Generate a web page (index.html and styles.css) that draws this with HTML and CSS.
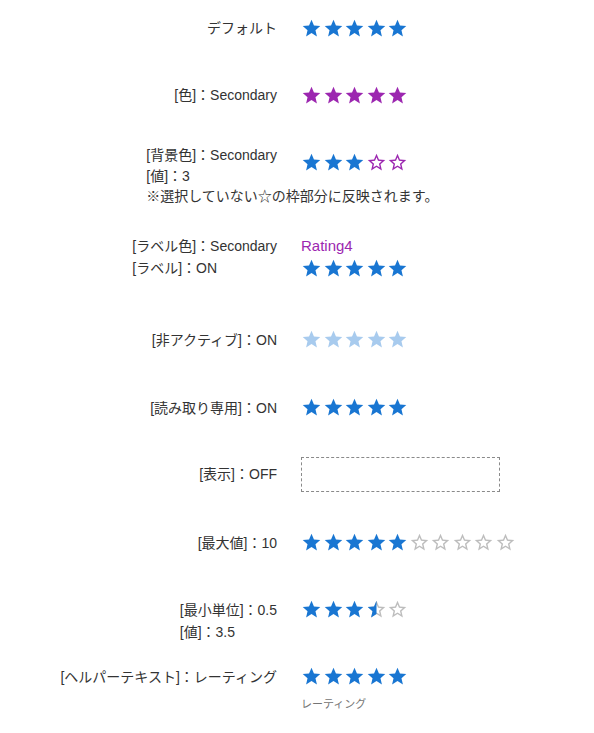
FILE: index.html
```html
<!DOCTYPE html>
<html lang="ja">
<head>
    <meta charset="UTF-8">
    <meta name="viewport" content="width=device-width, initial-scale=1.0">
    <title>Rating</title>
    <link rel="stylesheet" href="styles.css">
</head>
<body>

    <!-- star shapes shared by every rating below -->
    <svg class="defs" aria-hidden="true">
        <symbol id="star-full" viewBox="0 0 24 24">
            <path d="M12 17.27L18.18 21l-1.64-7.03L22 9.24l-7.19-.61L12 2 9.19 8.63 2 9.24l5.46 4.73L5.82 21z"/>
        </symbol>
        <symbol id="star-empty" viewBox="0 0 24 24">
            <path d="M22 9.24l-7.19-.62L12 2 9.19 8.63 2 9.24l5.46 4.73L5.82 21 12 17.27 18.18 21l-1.63-7.03L22 9.24zM12 15.4l-3.76 2.27 1-4.28-3.32-2.88 4.38-.38L12 6.1l1.71 4.04 4.38.38-3.32 2.88 1 4.28L12 15.4z"/>
        </symbol>
        <clipPath id="left-half">
            <rect x="0" y="0" width="12" height="24"/>
        </clipPath>
    </svg>

    <div class="page">

        <div class="row gap-45">
            <div class="label">デフォルト</div>
            <div class="stars">
                <svg class="star"><use href="#star-full"/></svg>
                <svg class="star"><use href="#star-full"/></svg>
                <svg class="star"><use href="#star-full"/></svg>
                <svg class="star"><use href="#star-full"/></svg>
                <svg class="star"><use href="#star-full"/></svg>
            </div>
        </div>

        <div class="row gap-39">
            <div class="label">[色]：Secondary</div>
            <div class="stars secondary">
                <svg class="star"><use href="#star-full"/></svg>
                <svg class="star"><use href="#star-full"/></svg>
                <svg class="star"><use href="#star-full"/></svg>
                <svg class="star"><use href="#star-full"/></svg>
                <svg class="star"><use href="#star-full"/></svg>
            </div>
        </div>

        <div class="row gap-28">
            <div class="label compact">
                <div>[背景色]：Secondary</div>
                <div>[値]：3</div>
                <div class="note">※選択していない☆の枠部分に反映されます。</div>
            </div>
            <div class="stars drop">
                <svg class="star"><use href="#star-full"/></svg>
                <svg class="star"><use href="#star-full"/></svg>
                <svg class="star"><use href="#star-full"/></svg>
                <svg class="star secondary"><use href="#star-empty"/></svg>
                <svg class="star secondary"><use href="#star-empty"/></svg>
            </div>
        </div>

        <div class="row gap-49">
            <div class="label">
                <div>[ラベル色]：Secondary</div>
                <div>[ラベル]：ON</div>
            </div>
            <div>
                <div class="rating-label">Rating4</div>
                <div class="stars">
                    <svg class="star"><use href="#star-full"/></svg>
                    <svg class="star"><use href="#star-full"/></svg>
                    <svg class="star"><use href="#star-full"/></svg>
                    <svg class="star"><use href="#star-full"/></svg>
                    <svg class="star"><use href="#star-full"/></svg>
                </div>
            </div>
        </div>

        <div class="row gap-46">
            <div class="label">[非アクティブ]：ON</div>
            <div class="stars disabled">
                <svg class="star"><use href="#star-full"/></svg>
                <svg class="star"><use href="#star-full"/></svg>
                <svg class="star"><use href="#star-full"/></svg>
                <svg class="star"><use href="#star-full"/></svg>
                <svg class="star"><use href="#star-full"/></svg>
            </div>
        </div>

        <div class="row gap-38">
            <div class="label">[読み取り専用]：ON</div>
            <div class="stars">
                <svg class="star"><use href="#star-full"/></svg>
                <svg class="star"><use href="#star-full"/></svg>
                <svg class="star"><use href="#star-full"/></svg>
                <svg class="star"><use href="#star-full"/></svg>
                <svg class="star"><use href="#star-full"/></svg>
            </div>
        </div>

        <div class="row centered gap-40">
            <div class="label">[表示]：OFF</div>
            <div class="hidden-box"></div>
        </div>

        <div class="row gap-45">
            <div class="label">[最大値]：10</div>
            <div class="stars">
                <svg class="star"><use href="#star-full"/></svg>
                <svg class="star"><use href="#star-full"/></svg>
                <svg class="star"><use href="#star-full"/></svg>
                <svg class="star"><use href="#star-full"/></svg>
                <svg class="star"><use href="#star-full"/></svg>
                <svg class="star off"><use href="#star-empty"/></svg>
                <svg class="star off"><use href="#star-empty"/></svg>
                <svg class="star off"><use href="#star-empty"/></svg>
                <svg class="star off"><use href="#star-empty"/></svg>
                <svg class="star off"><use href="#star-empty"/></svg>
            </div>
        </div>

        <div class="row gap-23">
            <div class="label">
                <div>[最小単位]：0.5</div>
                <div>[値]：3.5</div>
            </div>
            <div class="stars">
                <svg class="star"><use href="#star-full"/></svg>
                <svg class="star"><use href="#star-full"/></svg>
                <svg class="star"><use href="#star-full"/></svg>
                <svg class="star" viewBox="0 0 24 24">
                    <use href="#star-empty" class="off"/>
                    <use href="#star-full" clip-path="url(#left-half)"/>
                </svg>
                <svg class="star off"><use href="#star-empty"/></svg>
            </div>
        </div>

        <div class="row">
            <div class="label">[ヘルパーテキスト]：レーティング</div>
            <div>
                <div class="stars">
                    <svg class="star"><use href="#star-full"/></svg>
                    <svg class="star"><use href="#star-full"/></svg>
                    <svg class="star"><use href="#star-full"/></svg>
                    <svg class="star"><use href="#star-full"/></svg>
                    <svg class="star"><use href="#star-full"/></svg>
                </div>
                <div class="helper">レーティング</div>
            </div>
        </div>

    </div>

</body>
</html>
```

FILE: styles.css
```css
body {
    font-family: "Liberation Sans", "Noto Sans CJK JP", sans-serif;
    font-size: 14px;
    color: #333;
    background-color: white;
    margin: 0;
    padding: 0;
}
.defs {
    position: absolute;
    width: 0;
    height: 0;
}
.page {
    padding-top: 17px;
}

/* label on the left, rating on the right */
.row {
    display: grid;
    grid-template-columns: 277px 1fr;
    column-gap: 24px;
    align-items: start;
}
.row.centered {
    align-items: center;
}
.gap-23 { margin-bottom: 23px; }
.gap-28 { margin-bottom: 28px; }
.gap-38 { margin-bottom: 38px; }
.gap-39 { margin-bottom: 39px; }
.gap-40 { margin-bottom: 40px; }
.gap-45 { margin-bottom: 45px; }
.gap-46 { margin-bottom: 46px; }
.gap-49 { margin-bottom: 49px; }

.label {
    justify-self: end;
    text-align: left;
    line-height: 22px;
}
.label.compact {
    line-height: 20.5px;
}
.note {
    width: 0;
    white-space: nowrap;
}

/* stars */
.stars {
    display: flex;
    align-items: center;
    height: 22px;
    color: #1976d2; /* primary blue */
}
.stars.drop {
    margin-top: 6px;
}
.star {
    width: 21px;
    height: 21px;
    margin-right: 0.5px;
    fill: currentColor;
    flex-shrink: 0;
}
.secondary {
    color: #9c27b0; /* purple */
}
.disabled {
    color: #a8cbee; /* faded blue */
}
.off {
    color: #bdbdbd;
    fill: #bdbdbd;
}

.rating-label {
    color: #9c27b0;
    font-size: 15px;
    line-height: 22px;
    margin-bottom: 1px;
}
.helper {
    margin-top: 8px;
    font-size: 11px;
    line-height: 16px;
    color: #757575;
}

/* placeholder for a rating that is not shown */
.hidden-box {
    width: 197px;
    height: 33px;
    border: 1px dashed #8a8a8a;
}
```
